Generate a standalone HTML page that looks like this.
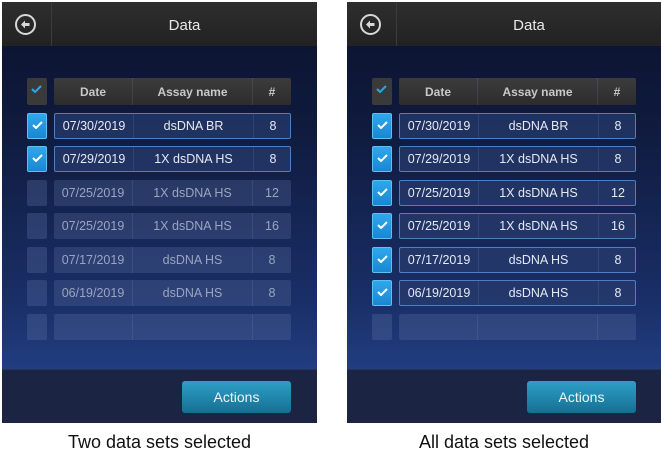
<!DOCTYPE html>
<html><head><meta charset="utf-8"><style>
*{margin:0;padding:0;box-sizing:border-box}
body{width:661px;height:453px;background:#fff;font-family:"Liberation Sans",sans-serif;position:relative;overflow:hidden}
.p{position:absolute;top:2px;height:421px;width:315px;background:linear-gradient(#0c1230 0px,#0f1a3c 120px,#1a2f68 300px,#213d80 367px);overflow:hidden}
.hd{position:absolute;left:0;top:0;right:0;height:44px;background:linear-gradient(#2e2e2e,#222);}
.hd .sep{position:absolute;left:49px;top:0;width:1px;height:44px;background:#3c3c3c}
.hd .t{position:absolute;left:50px;right:0;top:1px;line-height:46px;text-align:center;color:#e8e8e8;font-size:15px}
.bk{position:absolute;left:13px;top:12px;width:21px;height:21px;border:2px solid #d8d8d8;border-radius:50%}
.ft{position:absolute;left:0;right:0;bottom:0;height:54px;background:#1c2444;border-top:1px solid #2a3458}
.btn{position:absolute;left:180px;top:11px;width:109px;height:32px;border-radius:3px;background:linear-gradient(#2f9fc6,#166f93);color:#eaf6fb;font-size:14px;text-align:center;line-height:32px}
.cb{position:absolute;left:25px;width:20px;height:26px;border-radius:2px;background:rgba(90,110,160,.35)}
.cb.on{background:linear-gradient(#2fa8ec,#1a86d2);border:1px solid #5bc0f5}
.cb.hdcb{background:#3a3a3a;top:76px;height:27px}
.ck{position:absolute;left:4px;top:7px;width:11px;height:8px}
.r{position:absolute;left:52px;width:237px;height:26px;border-radius:2px;background:rgba(90,110,160,.32);color:#9aa4c0;font-size:12.5px}
.r.on{background:rgba(40,60,110,.7);border:1px solid #4f7fc0;color:#e4e9f4}
.r.h{background:linear-gradient(#3c3c3c,#2c2c2c);color:#c8c8c8;font-weight:bold;font-size:12px;top:76px;height:27px}
.r span{position:absolute;top:0;line-height:26px;text-align:center;border-right:1px solid rgba(150,170,210,.15);height:100%}
.r.h span{line-height:29px}
.r.on span{line-height:24px}
.a{left:0;width:79px}.b{left:79px;width:120px}.c{left:199px;width:38px;border-right:none!important}
.cap{position:absolute;top:432px;font-size:18px;color:#111;text-align:center}
</style></head><body>

<div class="p" style="left:2px">
 <div class="hd"><div class="bk"><svg width="17" height="17" viewBox="0 0 17 17" style="position:absolute;left:0;top:0"><path d="M4 8.5 L8 4.5 V7 H12.5 V10 H8 V12.5 Z" fill="#d8d8d8"/></svg></div><div class="sep"></div><div class="t">Data</div></div>
 <div class="cb hdcb"><svg class="ck" viewBox="0 0 11 8"><path d="M1 4 L4 7 L10 1" stroke="#28a8e8" stroke-width="2" fill="none"/></svg></div>
 <div class="r h"><span class="a">Date</span><span class="b">Assay name</span><span class="c">#</span></div>
 <div class="cb on" style="top:111px"><svg class="ck" viewBox="0 0 11 8"><path d="M1 4 L4 7 L10 1" stroke="#fff" stroke-width="2" fill="none"/></svg></div>
 <div class="r on" style="top:111px"><span class="a">07/30/2019</span><span class="b">dsDNA BR</span><span class="c">8</span></div>
 <div class="cb on" style="top:144px"><svg class="ck" viewBox="0 0 11 8"><path d="M1 4 L4 7 L10 1" stroke="#fff" stroke-width="2" fill="none"/></svg></div>
 <div class="r on" style="top:144px"><span class="a">07/29/2019</span><span class="b">1X dsDNA HS</span><span class="c">8</span></div>
 <div class="cb" style="top:178px"></div>
 <div class="r" style="top:178px"><span class="a">07/25/2019</span><span class="b">1X dsDNA HS</span><span class="c">12</span></div>
 <div class="cb" style="top:211px"></div>
 <div class="r" style="top:211px"><span class="a">07/25/2019</span><span class="b">1X dsDNA HS</span><span class="c">16</span></div>
 <div class="cb" style="top:245px"></div>
 <div class="r" style="top:245px"><span class="a">07/17/2019</span><span class="b">dsDNA HS</span><span class="c">8</span></div>
 <div class="cb" style="top:278px"></div>
 <div class="r" style="top:278px"><span class="a">06/19/2019</span><span class="b">dsDNA HS</span><span class="c">8</span></div>
 <div class="cb" style="top:312px"></div>
 <div class="r" style="top:312px"><span class="a"></span><span class="b"></span><span class="c"></span></div>
 <div class="ft"><div class="btn">Actions</div></div>
</div>

<div class="p" style="left:347px;width:314px">
 <div class="hd"><div class="bk"><svg width="17" height="17" viewBox="0 0 17 17" style="position:absolute;left:0;top:0"><path d="M4 8.5 L8 4.5 V7 H12.5 V10 H8 V12.5 Z" fill="#d8d8d8"/></svg></div><div class="sep"></div><div class="t">Data</div></div>
 <div class="cb hdcb"><svg class="ck" viewBox="0 0 11 8"><path d="M1 4 L4 7 L10 1" stroke="#28a8e8" stroke-width="2" fill="none"/></svg></div>
 <div class="r h"><span class="a">Date</span><span class="b">Assay name</span><span class="c">#</span></div>
 <div class="cb on" style="top:111px"><svg class="ck" viewBox="0 0 11 8"><path d="M1 4 L4 7 L10 1" stroke="#fff" stroke-width="2" fill="none"/></svg></div>
 <div class="r on" style="top:111px"><span class="a">07/30/2019</span><span class="b">dsDNA BR</span><span class="c">8</span></div>
 <div class="cb on" style="top:144px"><svg class="ck" viewBox="0 0 11 8"><path d="M1 4 L4 7 L10 1" stroke="#fff" stroke-width="2" fill="none"/></svg></div>
 <div class="r on" style="top:144px"><span class="a">07/29/2019</span><span class="b">1X dsDNA HS</span><span class="c">8</span></div>
 <div class="cb on" style="top:178px"><svg class="ck" viewBox="0 0 11 8"><path d="M1 4 L4 7 L10 1" stroke="#fff" stroke-width="2" fill="none"/></svg></div>
 <div class="r on" style="top:178px"><span class="a">07/25/2019</span><span class="b">1X dsDNA HS</span><span class="c">12</span></div>
 <div class="cb on" style="top:211px"><svg class="ck" viewBox="0 0 11 8"><path d="M1 4 L4 7 L10 1" stroke="#fff" stroke-width="2" fill="none"/></svg></div>
 <div class="r on" style="top:211px"><span class="a">07/25/2019</span><span class="b">1X dsDNA HS</span><span class="c">16</span></div>
 <div class="cb on" style="top:245px"><svg class="ck" viewBox="0 0 11 8"><path d="M1 4 L4 7 L10 1" stroke="#fff" stroke-width="2" fill="none"/></svg></div>
 <div class="r on" style="top:245px"><span class="a">07/17/2019</span><span class="b">dsDNA HS</span><span class="c">8</span></div>
 <div class="cb on" style="top:278px"><svg class="ck" viewBox="0 0 11 8"><path d="M1 4 L4 7 L10 1" stroke="#fff" stroke-width="2" fill="none"/></svg></div>
 <div class="r on" style="top:278px"><span class="a">06/19/2019</span><span class="b">dsDNA HS</span><span class="c">8</span></div>
 <div class="cb" style="top:312px"></div>
 <div class="r" style="top:312px"><span class="a"></span><span class="b"></span><span class="c"></span></div>
 <div class="ft"><div class="btn">Actions</div></div>
</div>

<div class="cap" style="left:2px;width:315px">Two data sets selected</div>
<div class="cap" style="left:347px;width:314px">All data sets selected</div>
</body></html>
